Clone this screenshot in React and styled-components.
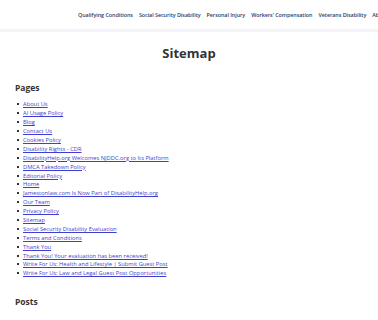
import React from 'react';
import styled, { createGlobalStyle } from 'styled-components';

const GlobalStyle = createGlobalStyle`
    body {
        margin: 0;
        background: #fff;
        font-family: "Open Sans", "Liberation Sans", sans-serif;
    }
`

const navItems = [
    'Qualifying Conditions',
    'Social Security Disability',
    'Personal Injury',
    "Workers' Compensation",
    'Veterans Disability',
    'About'
];

const pages = [
    'About Us',
    'AI Usage Policy',
    'Blog',
    'Contact Us',
    'Cookies Policy',
    'Disability Rights - CDR',
    'DisabilityHelp.org Welcomes NJDDC.org to Its Platform',
    'DMCA Takedown Policy',
    'Editorial Policy',
    'Home',
    'Jamestonlaw.com Is Now Part of DisabilityHelp.org',
    'Our Team',
    'Privacy Policy',
    'Sitemap',
    'Social Security Disability Evaluation',
    'Terms and Conditions',
    'Thank You',
    'Thank You! Your evaluation has been received!',
    'Write For Us: Health and Lifestyle | Submit Guest Post',
    'Write For Us: Law and Legal Guest Post Opportunities'
];

const App = () => {
    return (
    <Page>
        <GlobalStyle />
        <Header>
            <Nav>
                {navItems.map(item => <NavLink key={item} href='#'>{item}</NavLink>)}
            </Nav>
        </Header>
        <Main>
            <Title>Sitemap</Title>
            <SectionTitle>Pages</SectionTitle>
            <List>
                {pages.map(p => (
                    <Item key={p}><Link href='#'>{p}</Link></Item>
                ))}
            </List>
            <SectionTitle $gap={18}>Posts</SectionTitle>
            <Category>CFPA</Category>
        </Main>
    </Page>);
}

export default App;


const Page = styled.div`
    width: 378px;
    height: 320px;
    overflow: hidden;
`

const Header = styled.header`
    height: 29px;
    border-bottom: 3px solid #f3f3f9;
    display: flex;
    align-items: center;
    overflow: hidden;
`

const Nav = styled.nav`
    display: flex;
    gap: 6px;
    padding-left: 78px;
    white-space: nowrap;
    margin-top: 1px;
`

const NavLink = styled.a`
    font-size: 5.4px;
    font-weight: 600;
    color: #2b3d6e;
    text-decoration: none;
    letter-spacing: -0.05px;
`

const Main = styled.main`
    padding: 0 15px;
`

const Title = styled.h1`
    margin: 12px 0 0;
    text-align: center;
    font-size: 13px;
    line-height: 18px;
    font-weight: 700;
    color: #333;
`

const SectionTitle = styled.h2`
    margin: ${p => p.$gap || 20}px 0 0;
    font-size: 8.5px;
    line-height: 12px;
    font-weight: 700;
    color: #333;
`

const List = styled.ul`
    list-style: none;
    margin: 6px 0 0;
    padding: 0 0 0 2px;
`

const Item = styled.li`
    display: flex;
    align-items: center;
    gap: 4px;
    height: 8.9px;
    &::before {
        content: '';
        width: 2px;
        height: 2px;
        background: #333;
    }
`

const Link = styled.a`
    font-size: 5.75px;
    color: #3f3fcf;
    text-decoration: underline;
    white-space: nowrap;
`

const Category = styled.h3`
    margin: 11px 0 0;
    font-size: 7px;
    font-weight: 700;
    color: #333;
`
